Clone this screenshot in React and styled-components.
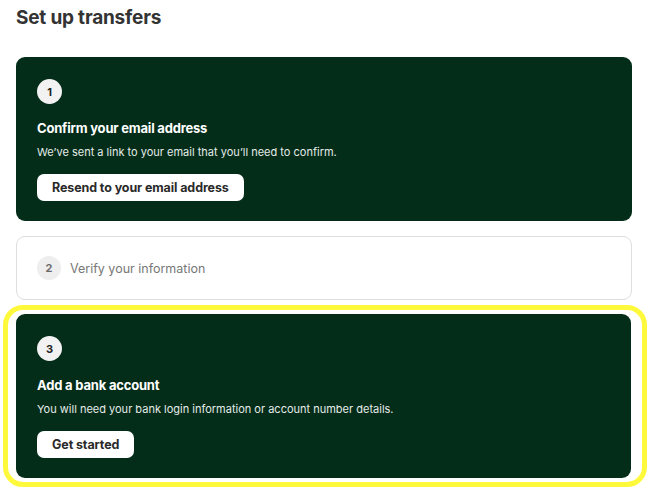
import React from 'react';
import styled, { createGlobalStyle } from 'styled-components';

const GlobalStyle = createGlobalStyle`
  html, body {
    margin: 0;
    padding: 0;
    background: #fff;
  }
  body {
    font-family: Inter, "Noto Sans", sans-serif;
    -webkit-font-smoothing: antialiased;
  }
`;

const Page = styled.div`
  width: 616px;
  padding: 6px 28px 0 16px;
`;

const Title = styled.h1`
  margin: 0 0 27px;
  font-size: 19px;
  line-height: 24px;
  font-weight: 700;
  color: #333;
  letter-spacing: -0.2px;
`;

const Steps = styled.div`
  display: flex;
  flex-direction: column;
`;

const Card = styled.section`
  box-sizing: border-box;
  border-radius: 9px;
  ${props =>
    props.active
      ? `
    background: #032d19;
    color: #fff;
    padding: 22px 21px 20px;
    display: flex;
    flex-direction: column;
    align-items: flex-start;
  `
      : `
    background: #fff;
    border: 1px solid #dedede;
    padding: 19px 20px;
    display: flex;
    align-items: center;
    gap: 9px;
  `};
  ${props => props.spaced && 'margin-bottom: 15px'};
`;

const Ring = styled.div`
  margin: -10px -15px 0 -13px;
  border: 5px solid #fff93c;
  border-radius: 20px;
  padding: 4px 11px 4px 8px;
  background: #fff;
`;

const Badge = styled.span`
  display: inline-flex;
  align-items: center;
  justify-content: center;
  width: 25px;
  height: 25px;
  border-radius: 50%;
  font-size: 11px;
  font-weight: 700;
  ${props =>
    props.muted
      ? 'background: #eeeeee; color: #6b6b6b; width: 24px; height: 24px;'
      : 'background: #f2f2f2; color: #222;'};
`;

const StepTitle = styled.h2`
  margin: 14px 0 0;
  font-size: 13px;
  line-height: 20px;
  font-weight: 700;
  letter-spacing: -0.2px;
`;

const StepText = styled.p`
  margin: 6px 0 0;
  font-size: 11px;
  line-height: 16px;
  color: #e6ebe8;
`;

const MutedLabel = styled.span`
  font-size: 12.5px;
  color: #777;
`;

const ActionButton = styled.button`
  margin-top: 14px;
  height: 27px;
  padding: 0 15px;
  border: none;
  border-radius: 7px;
  background: #fff;
  color: #2a2a2a;
  font-family: inherit;
  font-size: 12.5px;
  font-weight: 700;
  letter-spacing: -0.1px;
  cursor: pointer;
`;

export default function App() {
  return (
    <>
      <GlobalStyle />
      <Page>
        <Title>Set up transfers</Title>
        <Steps>
          <Card active spaced>
            <Badge>1</Badge>
            <StepTitle>Confirm your email address</StepTitle>
            <StepText>We’ve sent a link to your email that you’ll need to confirm.</StepText>
            <ActionButton>Resend to your email address</ActionButton>
          </Card>
          <Card spaced>
            <Badge muted>2</Badge>
            <MutedLabel>Verify your information</MutedLabel>
          </Card>
          <Ring>
            <Card active>
              <Badge>3</Badge>
              <StepTitle>Add a bank account</StepTitle>
              <StepText>You will need your bank login information or account number details.</StepText>
              <ActionButton>Get started</ActionButton>
            </Card>
          </Ring>
        </Steps>
      </Page>
    </>
  );
}
